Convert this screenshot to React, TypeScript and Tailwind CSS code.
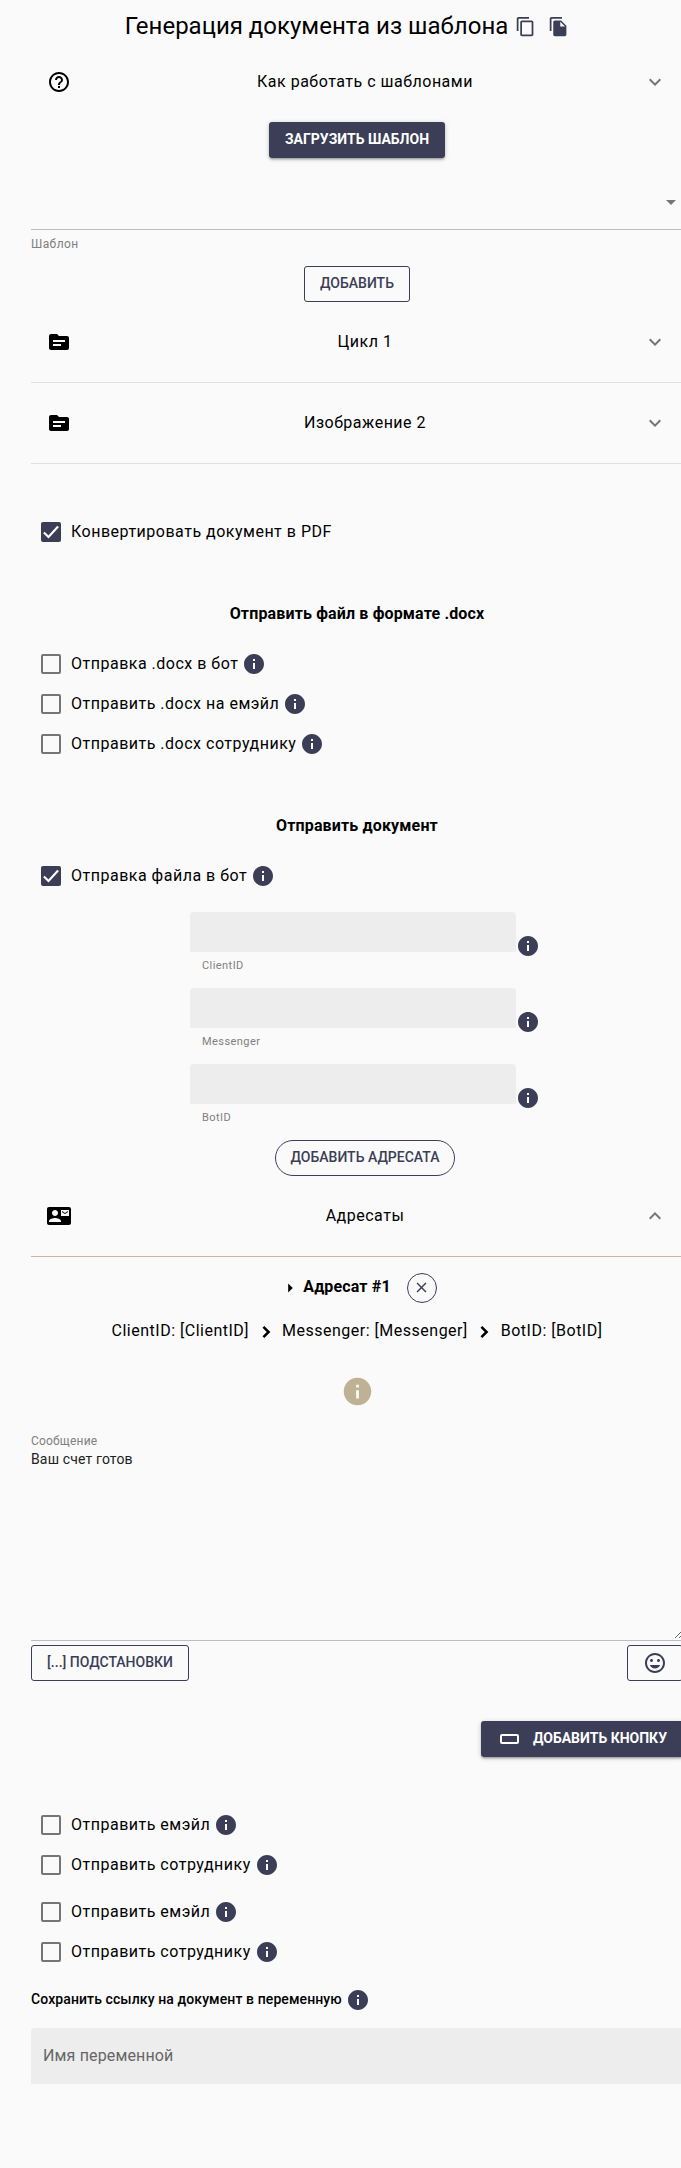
import type { ReactNode } from "react";
import {
  MdArrowDropDown,
  MdArrowRight,
  MdClose,
  MdContactMail,
  MdContentCopy,
  MdExpandLess,
  MdExpandMore,
  MdFileCopy,
  MdHelpOutline,
  MdInfo,
  MdMood,
  MdSource,
} from "react-icons/md";

function ExpansionHeader({ icon, label, open = false }: { icon: ReactNode; label: string; open?: boolean }) {
  return (
    <div className="flex h-12 items-center px-4">
      <div className="w-14 shrink-0">{icon}</div>
      <div className="flex-1 text-center text-base leading-6 tracking-[0.5px]">{label}</div>
      <div className="w-10 shrink-0 pl-4 text-[#757575]">
        {open ? <MdExpandLess size={24} /> : <MdExpandMore size={24} />}
      </div>
    </div>
  );
}

function Check({ label, checked = false, info = true }: { label: string; checked?: boolean; info?: boolean }) {
  return (
    <div className="flex h-10 items-center">
      <div className="flex size-10 shrink-0 items-center justify-center">
        {checked ? (
          <div className="flex size-5 items-center justify-center rounded-[2px] bg-[#3b3e56]">
            <svg viewBox="0 0 24 24" className="size-5" fill="none" stroke="#fff" strokeWidth="2.6">
              <path d="M3.5 12.5 9 18 20.5 5.5" />
            </svg>
          </div>
        ) : (
          <div className="size-5 rounded-[2px] border-2 border-[#757575]" />
        )}
      </div>
      <span className="text-base leading-6 tracking-[0.5px] whitespace-nowrap">{label}</span>
      {info && <MdInfo size={24} className="ml-1 text-[#3b3e56]" />}
    </div>
  );
}

function IdField({ label }: { label: string }) {
  return (
    <div className="flex h-[76px] items-start pl-[159px]">
      <div className="w-[326px]">
        <div className="h-10 rounded-t bg-[#ededed]" />
        <div className="px-3 pt-[7px] text-[11px] leading-[13px] tracking-[0.44px] text-[#808080]">{label}</div>
      </div>
      <MdInfo size={24} className="mt-[22px] text-[#3b3e56]" />
    </div>
  );
}

function PathChevron() {
  return (
    <svg viewBox="0 0 24 24" className="mx-[4.5px] mt-[2px] size-6" fill="none" stroke="currentColor" strokeWidth="2.5">
      <path d="M9.4 6.8 14.6 12 9.4 17.2" />
    </svg>
  );
}

const outlined =
  "flex h-9 items-center justify-center rounded-[3px] border border-[#3b3e56] text-sm font-medium text-[#3b3e56] whitespace-nowrap";
const raised =
  "flex h-9 items-center justify-center rounded-[3px] bg-[#3b3e56] text-sm font-bold text-white whitespace-nowrap shadow-[0_1px_5px_rgba(0,0,0,0.2),0_2px_2px_rgba(0,0,0,0.14),0_3px_1px_-2px_rgba(0,0,0,0.12)]";

export default function App() {
  return (
    <div className="h-[2168px] w-full overflow-hidden bg-[#fafafa] pl-[31px] font-['Roboto',sans-serif] text-black">
      <div className="w-[652px]">
        <div className="flex h-[58px] items-start justify-center pt-[10px] pr-5">
          <h1 className="text-2xl leading-8 whitespace-nowrap">Генерация документа из шаблона</h1>
          <MdContentCopy size={21} className="mt-[6px] ml-[7px] text-[#3b3e56]" />
          <MdFileCopy size={21} className="mt-[6px] ml-[12px] text-[#3b3e56]" />
        </div>

        <ExpansionHeader icon={<MdHelpOutline size={24} />} label="Как работать с шаблонами" />

        <div className="mt-4 flex justify-center">
          <button className={`${raised} w-[176px]`}>
            <span className="pb-[2px]">ЗАГРУЗИТЬ ШАБЛОН</span>
          </button>
        </div>

        <div className="mt-4 flex h-14 items-center justify-end border-b border-[#bdbdbd]">
          <MdArrowDropDown size={24} className="text-[#757575]" />
        </div>
        <div className="h-9 pt-[7px] text-xs leading-[14px] tracking-[0.4px] text-[#808080]">Шаблон</div>

        <div className="flex justify-center">
          <button className={`${outlined} w-[106px]`}>
            <span className="pb-[2px]">ДОБАВИТЬ</span>
          </button>
        </div>

        <div className="h-[81px] border-b border-[#e0e0e0] pt-4">
          <ExpansionHeader icon={<MdSource size={24} />} label="Цикл 1" />
        </div>
        <div className="h-[81px] border-b border-[#e0e0e0] pt-4">
          <ExpansionHeader icon={<MdSource size={24} />} label="Изображение 2" />
        </div>

        <div className="pt-12">
          <Check label="Конвертировать документ в PDF" checked info={false} />
        </div>
        <h2 className="pt-[50px] text-center text-base leading-6 font-bold tracking-[0.15px]">
          Отправить файл в формате .docx
        </h2>
        <div className="pt-[18px]">
          <Check label="Отправка .docx в бот" />
          <Check label="Отправить .docx на емэйл" />
          <Check label="Отправить .docx сотруднику" />
        </div>

        <h2 className="pt-[50px] text-center text-base leading-6 font-bold tracking-[0.15px]">Отправить документ</h2>
        <div className="pt-[18px]">
          <Check label="Отправка файла в бот" checked />
        </div>

        <div className="h-[243.5px] pt-4">
          <IdField label="ClientID" />
          <IdField label="Messenger" />
          <IdField label="BotID" />
        </div>
        <div className="flex justify-center pl-4">
          <button className={`${outlined} w-[180px] rounded-[28px]`}>
            <span className="pb-[2px]">ДОБАВИТЬ АДРЕСАТА</span>
          </button>
        </div>

        <div className="h-[81px] border-b border-[#c9b998] pt-4">
          <ExpansionHeader icon={<MdContactMail size={24} />} label="Адресаты" open />
        </div>

        <div className="flex h-[62px] items-center justify-center pl-[2px]">
          <MdArrowRight size={22} className="mr-[2px]" />
          <span className="pb-[2px] text-base leading-6 font-bold tracking-[0.15px]">Адресат #1</span>
          <span className="ml-[16px] flex size-[30px] items-center justify-center rounded-full border border-[#3b3e56] text-[#3b3e56]">
            <MdClose size={17} />
          </span>
        </div>
        <div className="flex h-6 items-center justify-center text-base leading-6 tracking-[0.5px] whitespace-nowrap">
          <span>ClientID: [ClientID]</span>
          <PathChevron />
          <span>Messenger: [Messenger]</span>
          <PathChevron />
          <span>BotID: [BotID]</span>
        </div>
        <div className="flex justify-center pt-[32px]">
          <MdInfo size={33} className="text-[#bfb294]" />
        </div>

        <div className="mt-[25.5px] h-[208px] border-b border-[#bdbdbd]">
          <div className="pt-[1px] text-xs leading-[14px] tracking-[0.2px] text-[#808080]">Сообщение</div>
          <textarea
            className="block h-[191px] w-full resize-y bg-transparent pt-[2px] text-sm leading-[18px] tracking-[0.15px] text-[#212121] outline-none"
            defaultValue="Ваш счет готов"
          />
        </div>
        <div className="mt-1 flex justify-between">
          <button className={`${outlined} w-[158px]`}>
            <span className="pb-[2px]">[...] ПОДСТАНОВКИ</span>
          </button>
          <button className={`${outlined} w-14`}>
            <MdMood size={24} />
          </button>
        </div>
        <div className="mt-10 flex justify-end">
          <button className={`${raised} w-[202px]`}>
            <svg viewBox="0 0 24 24" className="mr-3 size-6" fill="none" stroke="currentColor" strokeWidth="2">
              <rect x="4" y="8" width="17" height="8" rx="1" />
            </svg>
            <span className="pb-[2px]">ДОБАВИТЬ КНОПКУ</span>
          </button>
        </div>

        <div className="pt-12">
          <Check label="Отправить емэйл" />
          <Check label="Отправить сотруднику" />
        </div>
        <div className="pt-[6.5px]">
          <Check label="Отправить емэйл" />
          <Check label="Отправить сотруднику" />
        </div>

        <div className="flex h-[56.5px] items-center">
          <span className="pb-[2px] text-sm font-medium tracking-[0.1px] whitespace-nowrap">
            Сохранить ссылку на документ в переменную
          </span>
          <MdInfo size={24} className="ml-1 text-[#3b3e56]" />
        </div>
        <div className="flex h-14 items-center rounded-t bg-[#ededed] px-3 text-base tracking-[0.15px] text-[#666]">
          <span className="pb-[1px]">Имя переменной</span>
        </div>
      </div>
    </div>
  );
}
